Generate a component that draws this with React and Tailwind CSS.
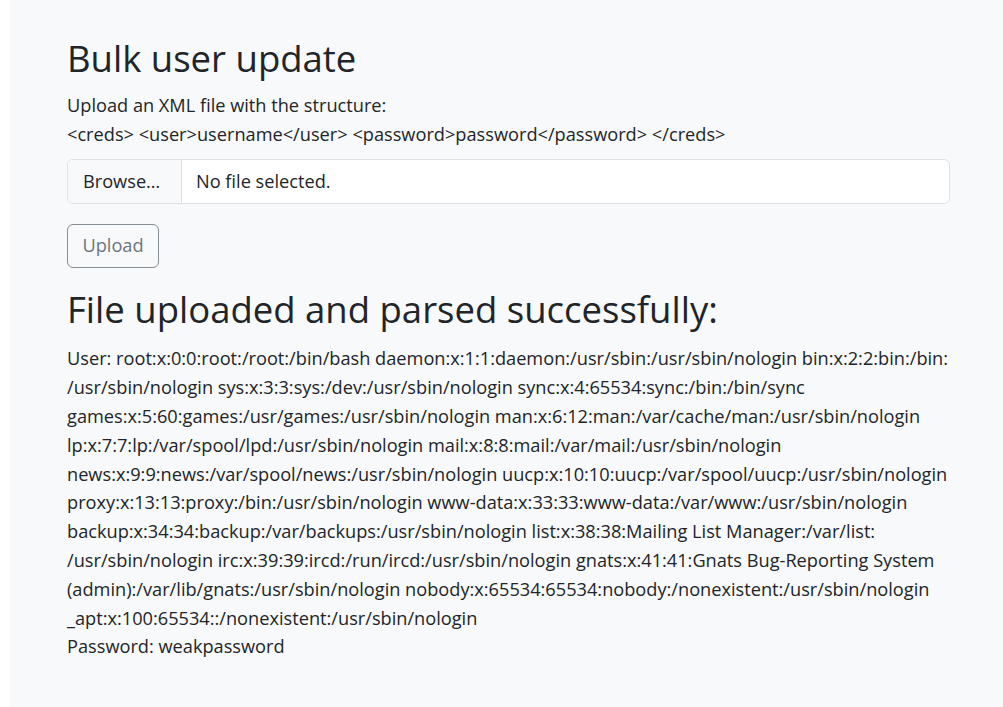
import React from 'react';

const lines = [
  'User: root:x:0:0:root:/root:/bin/bash daemon:x:1:1:daemon:/usr/sbin:/usr/sbin/nologin bin:x:2:2:bin:/bin:',
  '/usr/sbin/nologin sys:x:3:3:sys:/dev:/usr/sbin/nologin sync:x:4:65534:sync:/bin:/bin/sync',
  'games:x:5:60:games:/usr/games:/usr/sbin/nologin man:x:6:12:man:/var/cache/man:/usr/sbin/nologin',
  'lp:x:7:7:lp:/var/spool/lpd:/usr/sbin/nologin mail:x:8:8:mail:/var/mail:/usr/sbin/nologin',
  'news:x:9:9:news:/var/spool/news:/usr/sbin/nologin uucp:x:10:10:uucp:/var/spool/uucp:/usr/sbin/nologin',
  'proxy:x:13:13:proxy:/bin:/usr/sbin/nologin www-data:x:33:33:www-data:/var/www:/usr/sbin/nologin',
  'backup:x:34:34:backup:/var/backups:/usr/sbin/nologin list:x:38:38:Mailing List Manager:/var/list:',
  '/usr/sbin/nologin irc:x:39:39:ircd:/run/ircd:/usr/sbin/nologin gnats:x:41:41:Gnats Bug-Reporting System',
  '(admin):/var/lib/gnats:/usr/sbin/nologin nobody:x:65534:65534:nobody:/nonexistent:/usr/sbin/nologin',
  '_apt:x:100:65534::/nonexistent:/usr/sbin/nologin',
];

export default function App() {
  return (
    <div className="min-h-screen bg-white overflow-hidden">
      <div
        className="ml-[10px] min-h-[707px] bg-[#f8f9fa] pl-[57px] pr-[53px] pt-[36px] text-[#212529] text-[18.2px] leading-[28.8px]"
        style={{ fontFamily: '"Open Sans", sans-serif' }}
      >
        <h1 className="text-[36.5px] leading-[45.6px] font-normal mb-[9.6px]">Bulk user update</h1>
        <p>Upload an XML file with the structure:</p>
        <p>&lt;creds&gt; &lt;user&gt;username&lt;/user&gt; &lt;password&gt;password&lt;/password&gt; &lt;/creds&gt;</p>

        <div className="mt-[10px] flex h-[45px] items-stretch border border-[#dee2e6] rounded-[6px] bg-white overflow-hidden">
          <div className="flex items-center w-[114px] pl-[15px] bg-[#f8f9fa] border-r border-[#dee2e6]">Browse…</div>
          <div className="flex items-center px-[14px]">No file selected.</div>
        </div>

        <button
          disabled
          className="mt-[20px] h-[44px] w-[92px] border border-[#868e96] rounded-[6px] text-[#6c757d]"
        >
          Upload
        </button>

        <h1 className="mt-[19px] text-[36.5px] leading-[45.6px] font-normal mb-[12px]">File uploaded and parsed successfully:</h1>
        <div>
          {lines.map((l, i) => (
            <div key={i} className="whitespace-nowrap">{l}</div>
          ))}
          <div>Password: weakpassword</div>
        </div>
      </div>
    </div>
  );
}
